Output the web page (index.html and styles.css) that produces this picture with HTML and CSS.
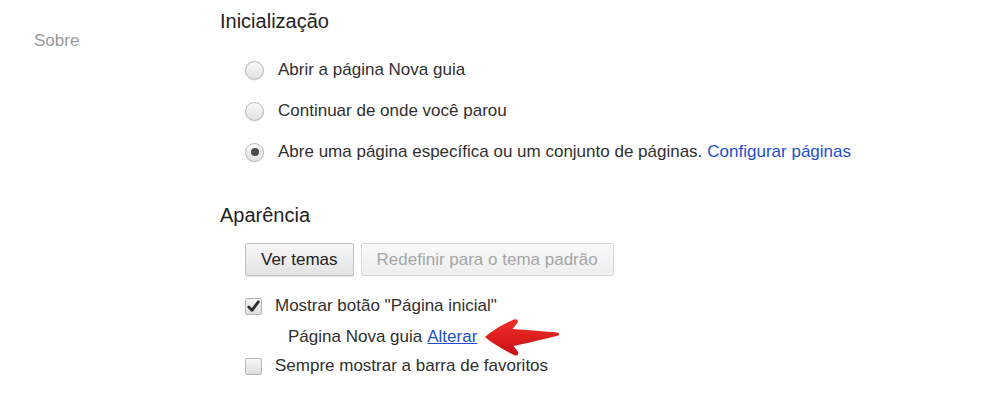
FILE: index.html
```html
<!DOCTYPE html>
<html lang="pt">
<head>
<meta charset="utf-8">
<link rel="stylesheet" href="styles.css">
</head>
<body>
<div class="page">
  <nav class="side">
    <div class="side-item">Sobre</div>
  </nav>
  <main class="main">
    <section class="section">
      <h2 class="title">Inicialização</h2>
      <div class="radio-list">
        <label class="radio-row"><span class="radio"></span><span>Abrir a página Nova guia</span></label>
        <label class="radio-row"><span class="radio"></span><span>Continuar de onde você parou</span></label>
        <label class="radio-row"><span class="radio checked"></span><span>Abre uma página específica ou um conjunto de páginas.</span><a class="link-plain">Configurar páginas</a></label>
      </div>
    </section>
    <section class="section appearance">
      <h2 class="title">Aparência</h2>
      <div class="buttons">
        <button class="btn">Ver temas</button>
        <button class="btn disabled">Redefinir para o tema padrão</button>
      </div>
      <div class="checks">
        <label class="check-row"><span class="checkbox checked"><svg viewBox="0 0 17 17" width="17" height="17"><path d="M3.8 9 L7 12.3 L13.3 3.8" fill="none" stroke="#2e2e2e" stroke-width="2.8" stroke-linecap="round" stroke-linejoin="round"/></svg></span><span>Mostrar botão "Página inicial"</span></label>
        <div class="sub-row">
          <span>Página Nova guia</span> <a class="link-under">Alterar</a>
          <svg class="arrow" viewBox="0 0 78 39" width="78" height="39"><defs><linearGradient id="ar" x1="0" y1="0" x2="0" y2="1"><stop offset="0" stop-color="#f0302a"/><stop offset="1" stop-color="#c80d12"/></linearGradient></defs><path d="M2 19 C 10 12 22 5 31 1.5 C 34.5 0.3 36 3 34 5.5 L 29.5 11 C 45 12 62 13.5 74 14.5 C 76.8 14.8 76.8 17.5 74 18 C 62 20.5 46 25 30.5 28 L 34.5 33 C 36.5 36 34.5 38.8 31 37 C 22 32.5 10 26 2 19 Z" fill="url(#ar)"/></svg>
        </div>
        <label class="check-row"><span class="checkbox"></span><span>Sempre mostrar a barra de favoritos</span></label>
      </div>
    </section>
  </main>
</div>
</body>
</html>
```
FILE: styles.css
```css
html, body {
  margin: 0;
  padding: 0;
  background: #fff;
}
body {
  font-family: "Liberation Sans", Arial, sans-serif;
  color: #303030;
  width: 984px;
  height: 411px;
  overflow: hidden;
}
.page {
  display: flex;
}
.side {
  width: 220px;
  flex: none;
  padding-top: 30px;
}
.side-item {
  padding-left: 34px;
  font-size: 17px;
  line-height: 22px;
  color: #9a9a9a;
}
.main {
  flex: 1;
  padding-top: 9px;
}
.title {
  margin: 0;
  font-size: 20px;
  font-weight: normal;
  color: #222;
  line-height: 24px;
}
.radio-list {
  display: flex;
  flex-direction: column;
  gap: 17px;
  margin-top: 25px;
  padding-left: 25px;
  font-size: 17px;
  line-height: 24px;
}
.radio-row {
  display: flex;
  align-items: center;
}
.radio {
  width: 19px;
  height: 19px;
  border-radius: 50%;
  box-sizing: border-box;
  border: 1px solid #b5b5b5;
  background: linear-gradient(#fafafa, #e0e0e0);
  box-shadow: 0 1px 1px rgba(0,0,0,0.06);
  margin-right: 14px;
  flex: none;
  display: flex;
  align-items: center;
  justify-content: center;
}
.radio.checked::after {
  content: "";
  width: 8px;
  height: 8px;
  border-radius: 50%;
  background: #4a4a4a;
}
.link-plain {
  color: #1e4fc9;
  margin-left: 5px;
}
.appearance {
  margin-top: 39px;
}
.buttons {
  display: flex;
  gap: 7px;
  margin-top: 16px;
  padding-left: 25px;
}
.btn {
  font-family: inherit;
  font-size: 17px;
  height: 33px;
  padding: 0 15px;
  border: 1px solid #c0c0c0;
  border-radius: 2px;
  background: linear-gradient(#f7f7f7, #e3e3e3);
  color: #222;
  box-shadow: 0 1px 1px rgba(0,0,0,0.1);
}
.btn.disabled {
  color: #a6a6a6;
  border-color: #d6d6d6;
  background: linear-gradient(#f9f9f9, #eeeeee);
  box-shadow: none;
}
.checks {
  margin-top: 18px;
  padding-left: 25px;
  font-size: 17px;
  line-height: 24px;
}
.check-row {
  display: flex;
  align-items: center;
}
.checkbox {
  width: 17px;
  height: 17px;
  box-sizing: border-box;
  border: 1px solid #b5b5b5;
  border-radius: 2px;
  background: linear-gradient(#f7f7f7, #dedede);
  margin-right: 13px;
  flex: none;
  position: relative;
}
.checkbox svg {
  position: absolute;
  left: -1px;
  top: -1px;
}
.sub-row {
  position: relative;
  padding-left: 43px;
  margin: 7px 0 5px;
  display: flex;
  align-items: center;
  gap: 5px;
}
.link-under {
  color: #1e4fc9;
  text-decoration: underline;
}
.arrow {
  position: absolute;
  left: 238px;
  top: -7px;
}
```
